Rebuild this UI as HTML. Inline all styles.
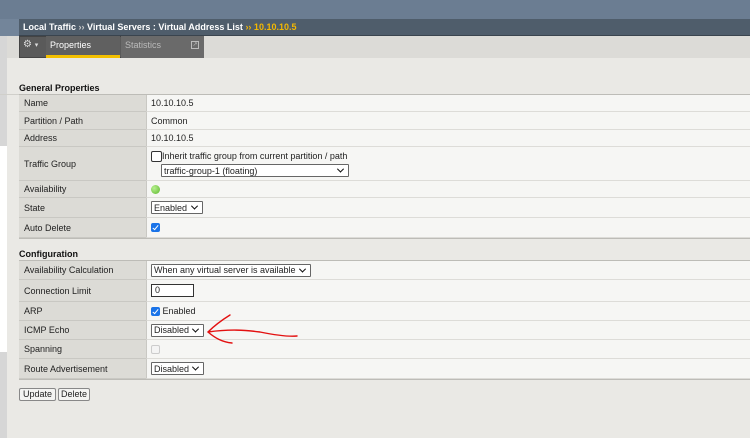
<!DOCTYPE html>
<html><head><meta charset="utf-8"><style>
*{box-sizing:border-box;margin:0;padding:0}
body{width:750px;height:438px;overflow:hidden;background:#eae9e5;font-family:"Liberation Sans",Arial,sans-serif;font-size:9px;color:#222;position:relative}
.a{position:absolute}
.lbl{position:absolute;left:19px;width:127px;background:#dcdbd6;border-bottom:1px solid #c9c8c3;padding-left:5px;display:flex;align-items:center;white-space:nowrap}
.val{position:absolute;left:146px;right:0;background:#f6f6f4;border-bottom:1px solid #dddcd8;border-left:1px solid #c9c8c3;padding-left:4px;display:flex;align-items:center;white-space:nowrap}
.sel{display:inline-flex;align-items:center;justify-content:space-between;height:13px;border:1px solid #666;border-radius:1px;background:#fff;padding:0 5px 0 2px;font-size:9px;white-space:nowrap;overflow:hidden}
.sel:after{content:"";flex:none;width:4px;height:4px;border-right:1.3px solid #111;border-bottom:1.3px solid #111;transform:rotate(45deg) translate(-1px,-1px);margin-left:4px}
.cb{display:inline-block;width:9px;height:9px;background:#1a73e8;border-radius:2px;position:relative}
.cb:after{content:"";position:absolute;left:3px;top:1px;width:2px;height:5px;border-right:1.4px solid #fff;border-bottom:1.4px solid #fff;transform:rotate(40deg)}
h3{position:absolute;left:19px;font-size:9px;font-weight:bold;color:#111}
.btn{position:absolute;top:388px;height:13px;border:1px solid #888;border-radius:2px;background:#f4f4f2;font-size:9px;text-align:center;line-height:11px}
</style></head><body>
<div class="a" style="left:0;top:0;width:750px;height:19px;background:#6b7d92"></div>
<div class="a" style="left:0;top:19px;width:19px;height:17px;background:#73859a"></div>
<div class="a" style="left:19px;top:19px;width:731px;height:17px;background:#4f5d6b;border-bottom:1px solid #3a444e;color:#fff;font-weight:bold;font-size:9px;line-height:16px;padding-left:4px;white-space:nowrap">Local Traffic <span style="color:#ccc">››</span> Virtual Servers : Virtual Address List <span style="color:#f4b800">›› 10.10.10.5</span></div>
<div class="a" style="left:0;top:36px;width:750px;height:22px;background:#dcdbd7"></div>
<div class="a" style="left:19px;top:36px;width:185px;height:22px;background:#5a5a5a;border:1px solid #444"></div>
<div class="a" style="left:23px;top:39px;color:#ddd;font-size:10px">⚙ <span style="font-size:7px">▾</span></div>
<div class="a" style="left:46px;top:36px;width:74px;height:22px;background:#606060;border-bottom:3px solid #f4c000;color:#fff;padding:4px 0 0 4px">Properties</div>
<div class="a" style="left:121px;top:36px;width:83px;height:22px;background:#6a6a6a;color:#bbb;padding:4px 0 0 4px">Statistics<span style="position:absolute;right:5px;top:5px;width:8px;height:8px;border:1px solid #bbb;font-size:6px;line-height:6px;text-align:center">↗</span></div>
<div class="a" style="left:0;top:36px;width:7px;height:110px;background:#d6d6d6"></div>
<div class="a" style="left:0;top:146px;width:7px;height:206px;background:#fff"></div>
<div class="a" style="left:0;top:352px;width:7px;height:86px;background:#d6d6d6"></div>
<div class="a" style="left:0;top:94px;width:750px;height:1px;background:#d0cfca"></div>

<h3 style="top:83px">General Properties</h3>
<div class="a" style="left:19px;top:94px;width:731px;height:145px;border:1px solid #bdbcb7;border-right:none"></div>
<div class="lbl" style="top:95px;height:17px">Name</div><div class="val" style="top:95px;height:17px">10.10.10.5</div>
<div class="lbl" style="top:112px;height:18px">Partition / Path</div><div class="val" style="top:112px;height:18px">Common</div>
<div class="lbl" style="top:130px;height:17px">Address</div><div class="val" style="top:130px;height:17px">10.10.10.5</div>
<div class="lbl" style="top:147px;height:34px">Traffic Group</div><div class="val" style="top:147px;height:34px;display:block;padding-top:4px"><span style="display:inline-block;width:11px;height:11px;border:1.5px solid #333;border-radius:2px;vertical-align:middle;background:#fff"></span>Inherit traffic group from current partition / path<br><span class="sel" style="width:188px;margin:2px 0 0 10px">traffic-group-1 (floating)</span></div>
<div class="lbl" style="top:181px;height:17px">Availability</div><div class="val" style="top:181px;height:17px"><span style="width:9px;height:9px;border-radius:50%;background:radial-gradient(circle at 35% 35%,#b8f090,#5cb82c);display:inline-block"></span></div>
<div class="lbl" style="top:198px;height:20px">State</div><div class="val" style="top:198px;height:20px"><span class="sel" style="width:52px">Enabled</span></div>
<div class="lbl" style="top:218px;height:20px">Auto Delete</div><div class="val" style="top:218px;height:20px"><span class="cb"></span></div>

<h3 style="top:249px">Configuration</h3>
<div class="a" style="left:19px;top:260px;width:731px;height:120px;border:1px solid #bdbcb7;border-right:none"></div>
<div class="lbl" style="top:261px;height:19px">Availability Calculation</div><div class="val" style="top:261px;height:19px"><span class="sel" style="width:160px">When any virtual server is available</span></div>
<div class="lbl" style="top:280px;height:22px">Connection Limit</div><div class="val" style="top:280px;height:22px"><span style="display:inline-block;width:43px;height:13px;border:1.5px solid #333;background:#fff;padding-left:3px;line-height:10px">0</span></div>
<div class="lbl" style="top:302px;height:19px">ARP</div><div class="val" style="top:302px;height:19px"><span class="cb"></span>&nbsp;Enabled</div>
<div class="lbl" style="top:321px;height:19px">ICMP Echo</div><div class="val" style="top:321px;height:19px"><span class="sel" style="width:53px">Disabled</span></div>
<div class="lbl" style="top:340px;height:19px">Spanning</div><div class="val" style="top:340px;height:19px"><span style="display:inline-block;width:9px;height:9px;border:1px solid #ccc;border-radius:2px;background:#f4f4f4"></span></div>
<div class="lbl" style="top:359px;height:20px">Route Advertisement</div><div class="val" style="top:359px;height:20px"><span class="sel" style="width:53px">Disabled</span></div>

<div class="btn" style="left:19px;width:37px">Update</div>
<div class="btn" style="left:58px;width:32px">Delete</div>

<svg class="a" style="left:200px;top:312px" width="110" height="40" viewBox="0 0 110 40"><path d="M30 3 C22 8 14 14 8 20 C15 26 22 30 32 31 M8 20 C30 17 45 18 60 20 C75 23 88 25 97 24" fill="none" stroke="#e31010" stroke-width="1.4" stroke-linecap="round"/></svg>
</body></html>
